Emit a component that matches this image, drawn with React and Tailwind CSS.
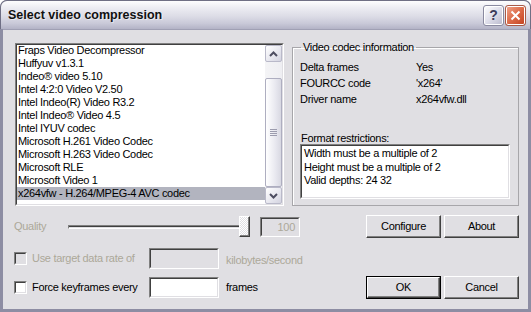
import React from 'react';

const codecs = [
  'Fraps Video Decompressor',
  'Huffyuv v1.3.1',
  'Indeo® video 5.10',
  'Intel 4:2:0 Video V2.50',
  'Intel Indeo(R) Video R3.2',
  'Intel Indeo® Video 4.5',
  'Intel IYUV codec',
  'Microsoft H.261 Video Codec',
  'Microsoft H.263 Video Codec',
  'Microsoft RLE',
  'Microsoft Video 1',
  'x264vfw - H.264/MPEG-4 AVC codec',
];

// classic 3d edges
function Sunken({ className = '', inner = 'bg-white', children }) {
  return (
    <div className={`border border-t-[#808080] border-l-[#808080] border-b-white border-r-white ${className}`}>
      <div className={`h-full w-full border border-t-[#404040] border-l-[#404040] border-b-[#e0dfe3] border-r-[#e0dfe3] ${inner}`}>
        {children}
      </div>
    </div>
  );
}

function Button({ children, isDefault }) {
  const face = (
    <div className="h-full w-full flex items-center justify-center border border-t-white border-l-white border-b-[#404040] border-r-[#404040] shadow-[inset_-1px_-1px_0_#808080] bg-[#e0dfe3]">
      {children}
    </div>
  );
  return (
    <div className={`w-[75px] h-[23px] ${isDefault ? 'border border-black' : ''}`}>
      {face}
    </div>
  );
}

function Chevron({ up }) {
  return (
    <svg width="9" height="6" viewBox="0 0 9 6">
      <path d={up ? 'M1 5 L4.5 1.5 L8 5' : 'M1 1 L4.5 4.5 L8 1'} stroke="#4d4d61" strokeWidth="2" fill="none" />
    </svg>
  );
}

function ScrollButton({ up }) {
  return (
    <div className="h-[17px] w-[17px] rounded-[2px] border border-[#b9b9c9] bg-[linear-gradient(to_bottom_right,#ffffff,#e6e6ee_60%,#d4d4e0)] flex items-center justify-center">
      <Chevron up={up} />
    </div>
  );
}

function Checkbox({ disabled }) {
  return (
    <Sunken className="w-[13px] h-[13px]" inner={disabled ? 'bg-[#e0dfe3]' : 'bg-white'} />
  );
}

export default function App() {
  const dis = 'text-[#aca899]';
  return (
    <div className="w-[531px] h-[312px] flex flex-col font-['Liberation_Sans',Arial,sans-serif] text-[11px] tracking-[-0.3px] text-black leading-[13px] bg-[#8d8da3] rounded-t-[7px]">
      {/* title bar */}
      <div className="h-[29px] shrink-0 flex items-center rounded-t-[7px] border border-b-0 border-[#6f6f84] bg-[linear-gradient(to_bottom,#fdfdfe_0%,#ececf2_25%,#dcdce6_55%,#c9c9d8_80%,#b3b3c6_100%)] pl-[7px] pr-[4px]">
        <span className="text-[12.5px] font-bold tracking-normal text-[#111] [text-shadow:1px_1px_0_#ffffff80]">Select video compression</span>
        <div className="ml-auto flex gap-[1px]">
          <div className="w-[21px] h-[21px] rounded-[3px] border border-[#8a8aa0] shadow-[inset_0_0_0_1px_#ffffff] bg-[linear-gradient(to_bottom_right,#ffffff,#dedeea_50%,#b9b9cc)] flex items-center justify-center">
            <span className="text-[14px] font-bold leading-none text-[#3c3c5a] tracking-normal">?</span>
          </div>
          <div className="w-[21px] h-[21px] rounded-[3px] border border-[#a85a48] shadow-[inset_0_0_0_1px_#ffffff] bg-[linear-gradient(to_bottom_right,#f1a78e,#dc6a48_50%,#c2401f)] flex items-center justify-center">
            <svg width="11" height="11" viewBox="0 0 11 11">
              <path d="M1.5 1.5 L9.5 9.5 M9.5 1.5 L1.5 9.5" stroke="#fff" strokeWidth="2" />
            </svg>
          </div>
        </div>
      </div>

      {/* client */}
      <div className="flex-1 flex flex-col mx-[3px] mb-[3px] bg-[#e0dfe3] border-t border-[#a0a0b4] pl-[11px] pr-[9px]">
        <div className="flex items-start mt-[11px]">
          {/* list */}
          <Sunken className="mt-[2px] ml-[1px] w-[269px] h-[163px]">
            <div className="flex h-full">
              <div className="flex-1 -mt-[1px]">
                {codecs.map((c, i) => (
                  <div
                    key={c}
                    className={`h-[13px] pl-[1px] whitespace-nowrap ${i === codecs.length - 1 ? 'bg-[#b2b4bf]' : ''}`}
                  >
                    {c}
                  </div>
                ))}
              </div>
              <div className="w-[17px] flex flex-col bg-[linear-gradient(to_right,#f4f4f6,#eeeef2)]">
                <ScrollButton up />
                <div className="flex-1 flex flex-col pt-[16px]">
                  <div className="h-[109px] rounded-[2px] border border-[#aeaec0] bg-[linear-gradient(to_right,#ffffff,#e9e9f0_60%,#d8d8e2)] flex flex-col items-center justify-center gap-[1px]">
                    <div className="w-[7px] h-[1px] bg-[#9c9cae]" />
                    <div className="w-[7px] h-[1px] bg-[#9c9cae]" />
                    <div className="w-[7px] h-[1px] bg-[#9c9cae]" />
                    <div className="w-[7px] h-[1px] bg-[#9c9cae]" />
                  </div>
                </div>
                <ScrollButton />
              </div>
            </div>
          </Sunken>

          {/* group box */}
          <fieldset className="ml-[8px] w-[227px] h-[165px] border border-[#a7a6aa] shadow-[inset_1px_1px_0_#ffffff] px-[7px]">
            <legend className="ml-[1px] px-[2px] leading-[13px]">Video codec information</legend>
            <div className="pt-[5px]">
              {[
                ['Delta frames', 'Yes'],
                ['FOURCC code', "'x264'"],
                ['Driver name', 'x264vfw.dll'],
              ].map(([k, v]) => (
                <div key={k} className="flex h-[16px] items-center">
                  <span className="w-[116px]">{k}</span>
                  <span>{v}</span>
                </div>
              ))}
            </div>
            <div className="mt-[25px] leading-[12px] pl-[1px]">Format restrictions:</div>
            <Sunken className="w-[210px] h-[55px]">
              <div className="pl-[2px] pt-[1px] leading-[13.5px]">
                <div>Width must be a multiple of 2</div>
                <div>Height must be a multiple of 2</div>
                <div>Valid depths: 24 32</div>
              </div>
            </Sunken>
          </fieldset>
        </div>

        {/* quality row */}
        <div className="flex items-center h-[23px] mt-[9px]">
          <span className={`w-[54px] ${dis}`}>Quality</span>
          <div className="relative w-[182px] h-[21px] flex items-center">
            <div className="w-full h-[4px] border border-t-[#808080] border-l-[#808080] border-b-white border-r-white shadow-[inset_0_1px_0_#404040]" />
            <div className="absolute right-0 top-0 w-[11px] h-[21px] border border-t-white border-l-white border-b-[#404040] border-r-[#404040] shadow-[inset_-1px_-1px_0_#808080] bg-[repeating-conic-gradient(#ffffff_0%_25%,#e0dfe3_0%_50%)] [background-size:2px_2px]" />
          </div>
          <Sunken className="ml-[10px] w-[40px] h-[20px]" inner="bg-[#e0dfe3]">
            <div className={`text-right pr-[3px] pt-[2px] ${dis}`}>100</div>
          </Sunken>
          <div className="ml-auto flex gap-[3px]">
            <Button>Configure</Button>
            <Button>About</Button>
          </div>
        </div>

        {/* data rate row */}
        <div className="flex items-center h-[21px] mt-[10px]">
          <div className="w-[135px] flex items-center">
            <Checkbox disabled />
            <span className={`ml-[5px] ${dis}`}>Use target data rate of</span>
          </div>
          <Sunken className="w-[70px] h-[21px]" inner="bg-[#e0dfe3]" />
          <span className={`ml-[7px] mt-[3px] ${dis}`}>kilobytes/second</span>
        </div>

        {/* keyframes row */}
        <div className="flex items-center h-[24px] mt-[6px]">
          <div className="w-[135px] flex items-center">
            <Checkbox />
            <span className="ml-[5px]">Force keyframes every</span>
          </div>
          <Sunken className="w-[70px] h-[21px]" />
          <span className="ml-[7px]">frames</span>
          <div className="ml-auto flex gap-[3px]">
            <Button isDefault>OK</Button>
            <Button>Cancel</Button>
          </div>
        </div>
      </div>
    </div>
  );
}
